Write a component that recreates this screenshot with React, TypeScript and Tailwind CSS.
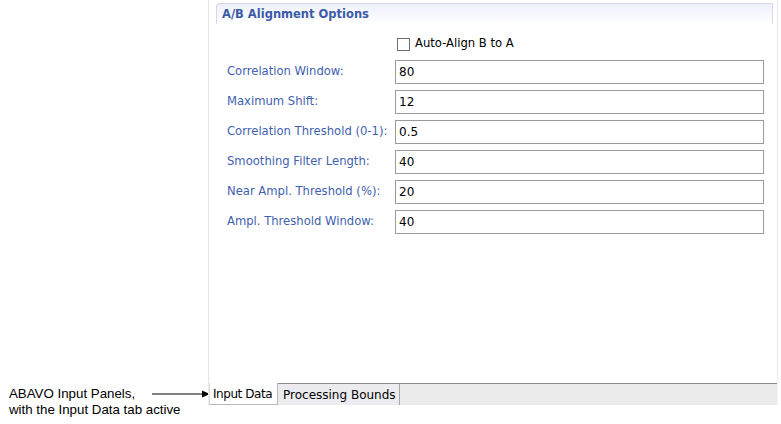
const fields = [
  { label: 'Correlation Window:', value: '80' },
  { label: 'Maximum Shift:', value: '12' },
  { label: 'Correlation Threshold (0-1):', value: '0.5' },
  { label: 'Smoothing Filter Length:', value: '40' },
  { label: 'Near Ampl. Threshold (%):', value: '20' },
  { label: 'Ampl. Threshold Window:', value: '40' },
];

export default function App() {
  return (
    <div className="flex w-[781px] h-[424px] bg-white" style={{ fontFamily: '"DejaVu Sans", sans-serif' }}>
      {/* caption + arrow */}
      <div className="w-[208px] flex flex-col justify-end pb-[6px]">
        <div className="flex items-start">
          <div
            className="pl-[9px] text-[13.3px] leading-[16px] text-black w-[152px] shrink-0 whitespace-nowrap"
            style={{ fontFamily: '"Liberation Sans", Arial, sans-serif' }}
          >
            <div>ABAVO Input Panels,</div>
            <div>with the Input Data tab active</div>
          </div>
          <svg width="56" height="10" viewBox="0 0 56 10" className="mt-[3px] shrink-0 overflow-visible">
            <line x1="0" y1="5" x2="52" y2="5" stroke="black" strokeWidth="1" />
            <polygon points="50,1.5 58,5 50,8.5" fill="black" />
          </svg>
        </div>
      </div>

      {/* panel */}
      <div className="w-[570px] flex flex-col">
        <div className="h-[383px] border-l border-[#e4e4e4] border-r border-r-[#ececec] pt-[3px]">
          <div className="ml-[7px] mr-[4px] h-[21px] border border-b-0 border-[#d4d8ea] rounded-tl-[4px] bg-gradient-to-b from-[#eef0fb] to-white flex items-center pl-[5px] pt-[1px]">
            <span className="text-[11.5px] font-bold text-[#3b5ba6]">A/B Alignment Options</span>
          </div>

          <div className="flex items-center ml-[188px] mt-[12px] h-[16px]">
            <div className="w-[13px] h-[13px] border border-[#6e6e6e] bg-white" />
            <span className="ml-[5px] text-[11.6px] text-black">Auto-Align B to A</span>
          </div>

          <div className="flex flex-col gap-[6px] mt-[8px]">
            {fields.map((f) => (
              <div key={f.label} className="flex items-center h-[24px]">
                <div className="w-[186px] pl-[18px] text-[11.6px] text-[#3f5fb0] whitespace-nowrap">{f.label}</div>
                <div className="w-[369px] h-[24px] border border-[#9a9a9a] bg-white flex items-center pl-[3px] text-[12px] text-black">
                  {f.value}
                </div>
              </div>
            ))}
          </div>
        </div>

        {/* tabs */}
        <div className="h-[22px] flex bg-[#ebebeb] border-r border-[#f4f4f4]">
          <div className="ml-[1px] w-[69px] shrink-0 h-[22px] bg-white border-l border-b border-r border-[#b8b8b8] border-l-[#dcdcdc] flex items-center pl-[3px] text-[12px] tracking-[-0.45px] text-black whitespace-nowrap">
            Input Data
          </div>
          <div className="flex-1 border-t border-[#8a8a8a] flex">
            <div className="w-[122px] h-[21px] bg-[#ececf0] border-r border-[#a8a8a8] flex items-center pl-[5px] text-[12px] text-black whitespace-nowrap">
              Processing Bounds
            </div>
          </div>
        </div>
      </div>
    </div>
  );
}
